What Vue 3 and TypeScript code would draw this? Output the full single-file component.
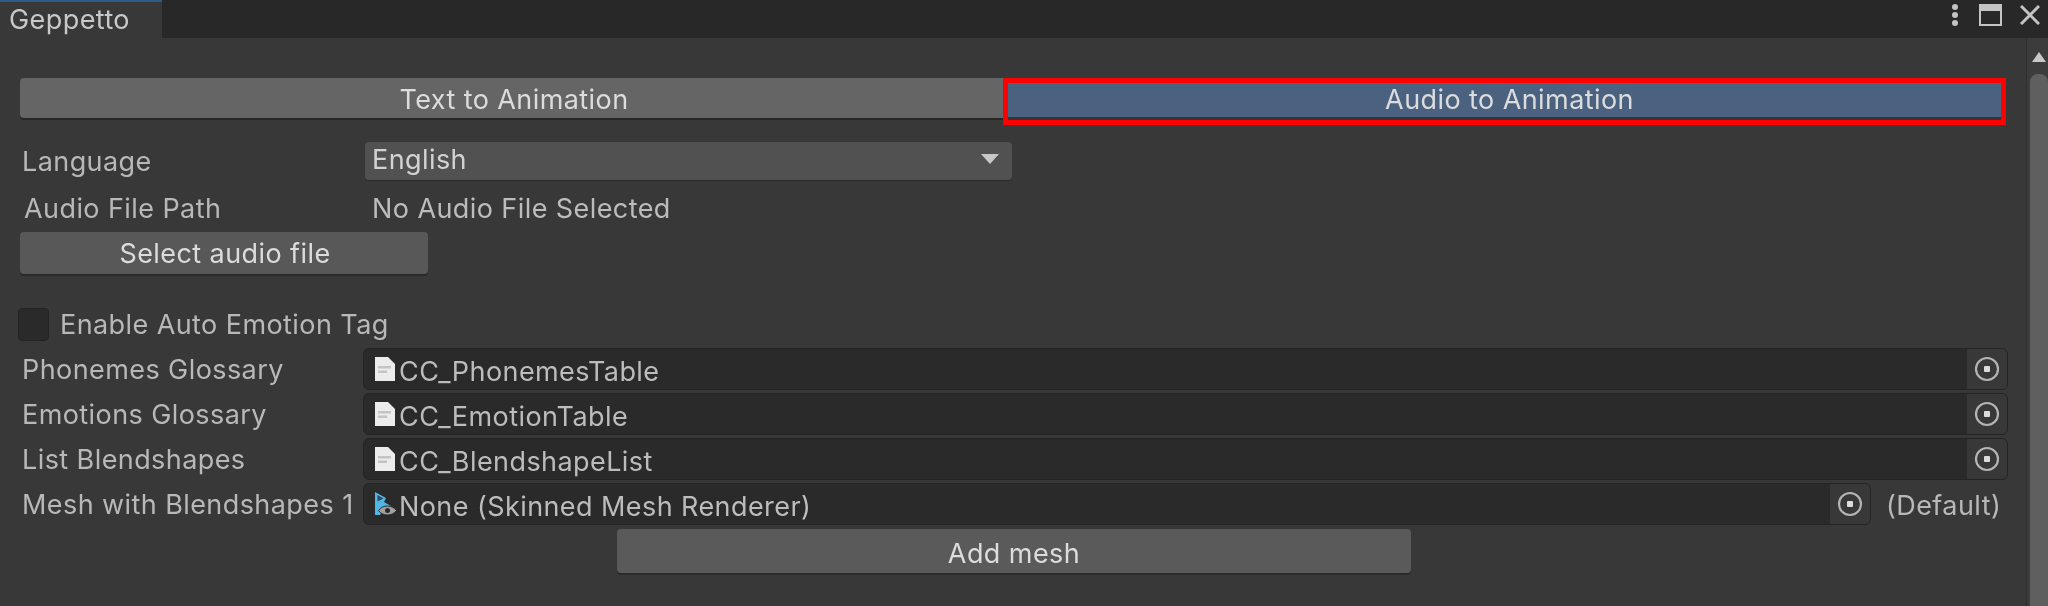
<template>
  <div class="window">
    <header class="tabbar">
      <div class="tab">Geppetto</div>
      <div class="win-icons">
        <svg width="12" height="28" viewBox="0 0 12 28"><circle cx="6" cy="6" r="3" fill="#c4c4c4" /><circle cx="6" cy="14" r="3" fill="#c4c4c4" /><circle cx="6" cy="22" r="3" fill="#c4c4c4" /></svg>
        <svg width="23" height="22" viewBox="0 0 23 22"><path d="M0 0h23v22H0z" fill="#c4c4c4" /><path d="M2 7h19v13H2z" fill="#282828" /></svg>
        <svg width="20" height="20" viewBox="0 0 20 20"><path d="M1 1l18 18M19 1L1 19" stroke="#c4c4c4" stroke-width="3" fill="none" /></svg>
      </div>
    </header>
    <div class="content">
      <main class="panel">
        <div class="tabs">
          <button class="mode">Text to Animation</button>
          <button class="mode active">Audio to Animation</button>
        </div>
        <div class="row lang-row">
          <span class="label">Language</span>
          <div class="dropdown">
            <span>English</span>
            <svg width="18" height="10" viewBox="0 0 18 10"><path d="M0 0h18L9 10z" fill="#c8c8c8" /></svg>
          </div>
        </div>
        <div class="row path-row">
          <span class="label path-label">Audio File Path</span>
          <span class="path-value">No Audio File Selected</span>
        </div>
        <button class="btn select-btn">Select audio file</button>
        <div class="check-row">
          <span class="checkbox"></span>
          <span>Enable Auto Emotion Tag</span>
        </div>
        <div v-for="item in assets" :key="item.label" class="row field-row">
          <span class="label">{{ item.label }}</span>
          <div class="objfield">
            <svg class="file-icon" width="21" height="24" viewBox="0 0 21 24">
              <path d="M1 0h13l7 7v17H1z" fill="#ececec" />
              <path d="M4 9h13v2.500H4zM4 13.500h9V16H4z" fill="#c4c4c4" />
            </svg>
            <span class="objname">{{ item.value }}</span>
            <span class="picker">
              <svg width="26" height="26" viewBox="0 0 26 26"><circle cx="13" cy="13" r="11" stroke="#b4b4b4" stroke-width="2.200" fill="none" /><rect x="10" y="10" width="6" height="6" rx="1" fill="#dcdcdc" /></svg>
            </span>
          </div>
        </div>
        <div class="row field-row mesh-row">
          <span class="label">Mesh with Blendshapes 1</span>
          <div class="objfield">
            <svg class="file-icon mesh-icon" width="23" height="24" viewBox="0 0 23 24">
              <path d="M1 0l11 6-2 4 7 4-7 2-4 7H1z" fill="#4db8e8" />
              <path d="M3.500 3l6 3.500-6 3z" fill="#2f4a5c" />
              <path d="M4.500 18.500c4-6 14-6 18 0-4 6-14 6-18 0z" fill="#a0a0a0" stroke="#2a2a2a" stroke-width="1" />
              <circle cx="13.500" cy="18.500" r="2.500" fill="#2a2a2a" />
            </svg>
            <span class="objname">None (Skinned Mesh Renderer)</span>
            <span class="picker">
              <svg width="26" height="26" viewBox="0 0 26 26"><circle cx="13" cy="13" r="11" stroke="#b4b4b4" stroke-width="2.200" fill="none" /><rect x="10" y="10" width="6" height="6" rx="1" fill="#dcdcdc" /></svg>
            </span>
          </div>
          <span class="default-note">(Default)</span>
        </div>
        <div class="add-wrap">
          <button class="btn add-btn">Add mesh</button>
        </div>
      </main>
      <aside class="scrollbar">
        <svg width="14" height="10" viewBox="0 0 14 10"><path d="M7 0l7 10H0z" fill="#c8c8c8" /></svg>
        <div class="thumb"></div>
      </aside>
    </div>
  </div>
</template>

<script setup lang="ts">
interface AssetField {
  label: string
  value: string
}

const assets: AssetField[] = [
  { label: 'Phonemes Glossary', value: 'CC_PhonemesTable' },
  { label: 'Emotions Glossary', value: 'CC_EmotionTable' },
  { label: 'List Blendshapes', value: 'CC_BlendshapeList' }
]
</script>

<style>
html,
body {
  margin: 0;
  background: #383838;
}
</style>

<style scoped>
.window {
  width: 2048px;
  height: 606px;
  overflow: hidden;
  background: #383838;
  color: #c8c8c8;
  font-family: Inter, "Liberation Sans", sans-serif;
  font-size: 27px;
  letter-spacing: 0.42px;
  display: flex;
  flex-direction: column;
  filter: blur(0.5px);
}

.tabbar {
  height: 38px;
  flex: none;
  background: #282828;
  display: flex;
  justify-content: space-between;
}

.tab {
  width: 153px;
  padding-left: 9px;
  height: 36px;
  line-height: 36px;
  border-top: 2px solid #2c5d87;
  background: #383838;
}

.win-icons {
  display: flex;
  align-items: center;
  gap: 18px;
  padding-right: 8px;
  height: 30px;
}

.content {
  flex: 1;
  display: flex;
  min-height: 0;
}

.panel {
  flex: 1;
  padding: 40px 18px 0 20px;
}

.scrollbar {
  width: 18px;
  padding-left: 3px;
  border-left: 1px solid #2f2f2f;
  background: #3c3c3c;
  display: flex;
  flex-direction: column;
  align-items: center;
  padding-top: 14px;
  gap: 12px;
}

.thumb {
  flex: 1;
  width: 100%;
  background: #5f5f5f;
  border-radius: 8px 8px 0 0;
}

button {
  font: inherit;
  letter-spacing: inherit;
  color: #dcdcdc;
  border: 0;
  padding: 0;
}

.tabs {
  display: flex;
  height: 47px;
}

.mode {
  width: 983px;
  height: 40px;
  padding: 2px 0 0 5px;
  background: #656565;
  border-radius: 4px 0 0 4px;
  box-shadow: 0 2px 0 #262626;
}

.mode.active {
  width: 1003px;
  height: 47px;
  background: #4a6180;
  border: 5px solid #fe0000;
  border-radius: 0;
  box-shadow: inset 0 -3px 0 #353535;
  padding: 0 0 5px 10px;
}

.row {
  display: flex;
  align-items: center;
}

.label {
  width: 343px;
  flex: none;
  padding-left: 2px;
  color: #b8b8b8;
  box-sizing: border-box;
}

.lang-row {
  margin-top: 17px;
  height: 38px;
}

.dropdown {
  margin-left: 2px;
  width: 647px;
  height: 38px;
  box-sizing: border-box;
  padding: 0 13px 4px 7px;
  background: #515151;
  border-radius: 4px;
  box-shadow: 0 1px 0 #2a2a2a;
  color: #d2d2d2;
  display: flex;
  align-items: center;
  justify-content: space-between;
}

.path-row {
  height: 36px;
  margin-top: 10px;
}

.path-label {
  padding-left: 4px;
}

.path-value {
  margin-left: 9px;
  color: #bcbcbc;
}

.btn {
  display: block;
  background: #585858;
  border-radius: 4px;
  box-shadow: 0 2px 0 #2b2b2b;
}

.select-btn {
  margin-top: 6px;
  width: 408px;
  height: 42px;
  padding: 1px 0 0 2px;
}

.check-row {
  margin-top: 31px;
  height: 38px;
  margin-left: -2px;
  display: flex;
  align-items: center;
  gap: 11px;
  color: #b8b8b8;
}

.checkbox {
  width: 29px;
  height: 31px;
  background: #2a2a2a;
  border: 1px solid #242424;
  border-radius: 4px;
}

.field-row {
  height: 42px;
  margin-bottom: 3px;
}

.check-row + .field-row {
  margin-top: 5px;
}

.mesh-row {
  margin-top: 1px;
}

.objfield {
  flex: 1;
  height: 40px;
  display: flex;
  align-items: center;
  background: #2a2a2a;
  border: 1px solid #242424;
  border-radius: 6px;
  overflow: hidden;
}

.file-icon {
  margin-left: 10px;
  flex: none;
}

.mesh-icon {
  margin-right: -2px;
}

.objname {
  flex: 1;
  margin-left: 4px;
  margin-top: 4px;
  color: #bcbcbc;
}

.picker {
  width: 40px;
  height: 100%;
  background: #383838;
  display: flex;
  align-items: center;
  justify-content: center;
}

.default-note {
  width: 137px;
  margin-top: 2px;
  padding-left: 15px;
  box-sizing: border-box;
  color: #b8b8b8;
}

.add-wrap {
  padding-left: 597px;
  margin-top: 4px;
}

.add-btn {
  width: 794px;
  height: 44px;
  padding-top: 4px;
  background: #5a5a5a;
}
</style>
